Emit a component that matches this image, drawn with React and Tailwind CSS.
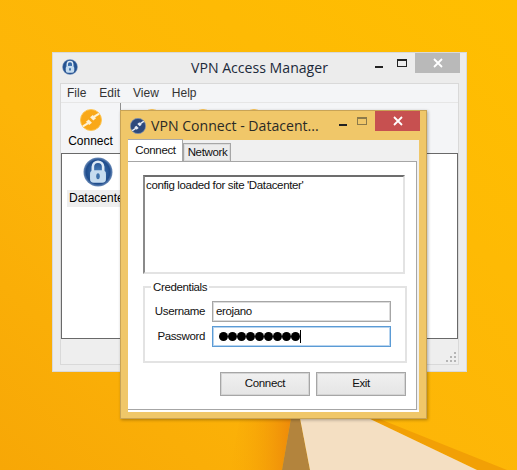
import React from "react";

const seg = { fontFamily: '"Open Sans", "Noto Sans", sans-serif' };
const sans = { fontFamily: '"Liberation Sans", sans-serif' };

function Wallpaper() {
  return (
    <svg className="absolute inset-0" width="517" height="470" viewBox="0 0 517 470">
      <defs>
        <linearGradient id="wp" x1="1" y1="0" x2="0" y2="1">
          <stop offset="0" stopColor="#ffbf00" />
          <stop offset="0.6" stopColor="#fdb508" />
          <stop offset="1" stopColor="#f7a706" />
        </linearGradient>
        <linearGradient id="ob" x1="0" y1="0" x2="1" y2="0">
          <stop offset="0" stopColor="#f7a706" stopOpacity="0" />
          <stop offset="1" stopColor="#ee8a0a" />
        </linearGradient>
      </defs>
      <rect width="517" height="470" fill="url(#wp)" />
      <polygon points="240,418 291,418 282,470 230,470" fill="url(#ob)" />
      <polygon points="368,418 377,418 507,470 477,470" fill="#f2a005" />
      <polygon points="291,418 300,418 310,470 282,470" fill="#b3843d" />
      <polygon points="300,418 368,418 477,470 310,470" fill="#f4dfc2" />
    </svg>
  );
}

function LockIcon({ size = 32, id = "lk" }) {
  return (
    <svg width={size} height={size} viewBox="0 0 32 32">
      <defs>
        <radialGradient id={id} cx="0.5" cy="0.5" r="0.5">
          <stop offset="0" stopColor="#4c82bd" />
          <stop offset="0.82" stopColor="#1f4c8c" />
          <stop offset="1" stopColor="#6f8fbb" />
        </radialGradient>
      </defs>
      <circle cx="16" cy="16" r="15.5" fill={`url(#${id})`} />
      <path d="M10.5 15v-4.5a5.5 5.5 0 0 1 11 0V15" fill="none" stroke="#dbe8f4" strokeWidth="2.8" />
      <rect x="7.5" y="14" width="17" height="13.5" rx="4" fill="#c6dcef" />
      <ellipse cx="16" cy="20.5" rx="1.9" ry="3.2" fill="#3f72ab" />
    </svg>
  );
}

function PlugIcon({ size = 24, dark = false }) {
  const fill = dark ? "#2d4a7c" : "#f9a818";
  const edge = dark ? "#8b9dbb" : "#fcc658";
  const line = dark ? "#e6edf5" : "#fff1d2";
  return (
    <svg width={size} height={size} viewBox="0 0 24 24">
      <circle cx="12" cy="12" r="11.5" fill={fill} stroke={edge} strokeWidth="1" />
      <path d="M4 18.5 L8 16" stroke={line} strokeWidth="2.2" strokeLinecap="round" />
      <path d="M20 5.5 L16 8" stroke={line} strokeWidth="2.2" strokeLinecap="round" />
      <path d="M6.5 14 L10 17.5 L13 15 L9.5 11.5 Z" fill={line} />
      <path d="M17.5 10 L14 6.5 L11 9 L14.5 12.5 Z" fill={line} />
    </svg>
  );
}

function Grip() {
  return (
    <svg width="12" height="12" viewBox="0 0 12 12" fill="#b5b5b5">
      <rect x="9" y="1" width="2" height="2" />
      <rect x="5" y="5" width="2" height="2" />
      <rect x="9" y="5" width="2" height="2" />
      <rect x="1" y="9" width="2" height="2" />
      <rect x="5" y="9" width="2" height="2" />
      <rect x="9" y="9" width="2" height="2" />
    </svg>
  );
}

function CloseX() {
  return (
    <svg width="10" height="10" viewBox="0 0 10 10">
      <path d="M1 1 L9 9 M9 1 L1 9" stroke="#fff" strokeWidth="1.8" />
    </svg>
  );
}

function MainWindow() {
  return (
    <div className="absolute left-[52px] top-[52px] w-[415px] h-[320px] bg-[#ececec] border border-[#d9d9d9] flex flex-col">
      <div className="h-[30px] grid grid-cols-[1fr_auto_1fr] items-start shrink-0">
        <div className="ml-[9px] mt-[6px]">
          <LockIcon size={16} id="lk-small" />
        </div>
        <div className="text-[14.1px] leading-[20px] mt-[5px] text-[#1c2a3a]" style={seg}>
          VPN Access Manager
        </div>
        <div className="flex items-start justify-end mr-[6px] h-[20px]">
          <div className="w-[8px] h-[2px] bg-[#222] mt-[13px]" />
          <div className="w-[10px] h-[8px] border border-[#222] border-t-2 mt-[6px] ml-[14px]" />
          <div className="w-[45px] h-[20px] bg-[#b9b9b9] flex items-center justify-center ml-[8px]">
            <CloseX />
          </div>
        </div>
      </div>
      <div className="mx-[7px] flex-1 flex flex-col border border-[#d9d9d9] bg-[#f4f5f7] min-h-0">
        <div className="h-[18px] flex items-center gap-[13px] px-[6px] text-[12px] text-[#333] shrink-0 border-b border-[#e6e6e6] box-content" style={sans}>
          <span>File</span>
          <span>Edit</span>
          <span>View</span>
          <span>Help</span>
        </div>
        <div className="h-[50px] flex shrink-0">
          <div className="w-[59px] flex flex-col items-center pt-[6px]">
            <PlugIcon size={22} />
            <span className="text-[12px] leading-[14px] mt-[3px] text-black" style={sans}>Connect</span>
          </div>
          <div className="w-px h-[10px] bg-[#8f8f8f]" />
          <div className="pl-[20px] pt-[6px] flex gap-[29px]">
            <PlugIcon size={22} />
            <PlugIcon size={22} />
            <PlugIcon size={22} />
          </div>
        </div>
        <div className="flex-1 bg-white border border-[#696969] min-h-0 pt-[3px] pl-[5px]">
          <div className="w-[62px] flex flex-col items-center">
            <LockIcon size={30} id="lk-big" />
            <div className="mt-[3px] w-[62px] h-[17px] bg-[#eeeeee] text-[12px] leading-[17px] pl-[2px] text-black whitespace-nowrap" style={sans}>
              Datacenter
            </div>
          </div>
        </div>
        <div className="h-[25px] bg-[#eeeeee] shrink-0 flex items-end justify-end pr-[1px] pb-[1px]">
          <Grip />
        </div>
      </div>
      <div className="h-[6px] shrink-0" />
    </div>
  );
}

function Field({ label, value, focus, dots }) {
  return (
    <div className="flex items-center">
      <div className="w-[60px] text-right text-[#111]">{label}</div>
      <div
        className={
          focus
            ? "ml-[7px] w-[179px] h-[21px] bg-white border border-[#5b9bd5] shadow-[inset_0_0_0_1px_#b7d4ef] flex items-center pl-[6px]"
            : "ml-[7px] w-[179px] h-[21px] bg-white border border-[#a6a6a6] shadow-[inset_0_0_0_1px_#dcdcdc] flex items-center pl-[3px]"
        }
      >
        {dots ? (
          <div className="flex items-center">
            {Array.from({ length: 9 }).map((_, i) => (
              <div key={i} className="w-[9px] h-[9px] rounded-full bg-black" />
            ))}
            <div className="w-px h-[13px] bg-black" />
          </div>
        ) : (
          <span className="text-[#111]">{value}</span>
        )}
      </div>
    </div>
  );
}

function Button({ children }) {
  return (
    <div className="w-[90px] h-[24px] border border-[#a6a6a6] shadow-[inset_0_0_0_1px_#d4d4d4] bg-gradient-to-b from-[#f0f0f0] to-[#e5e5e5] flex items-center justify-center text-[#111]">
      {children}
    </div>
  );
}

function Dialog() {
  return (
    <div
      className="absolute left-[120px] top-[110px] w-[307px] h-[309px] bg-[#f0c769] border border-[#c8a356] shadow-[1px_1px_3px_rgba(0,0,0,0.3)] flex flex-col text-[11.5px] tracking-[-0.36px]"
      style={sans}
    >
      <div className="h-[29px] flex items-start shrink-0 tracking-normal">
        <div className="ml-[9px] mt-[7px]">
          <PlugIcon size={16} dark />
        </div>
        <div className="ml-[5px] mt-[5px] text-[14.1px] leading-[20px] text-[#2a2a26] flex-1 whitespace-nowrap" style={seg}>
          VPN Connect - Datacent...
        </div>
        <div className="w-[8px] h-[2px] bg-[#222] mt-[13px] mr-[10px]" />
        <div className="w-[10px] h-[8px] border border-[#8c7a4a] border-t-2 mt-[6px] mr-[8px]" />
        <div className="w-[45px] h-[20px] bg-[#c75050] flex items-center justify-center mr-[6px]">
          <CloseX />
        </div>
      </div>
      <div className="mx-[7px] h-[272px] bg-[#f0f0f0] flex flex-col border-b-2 border-white">
        <div className="flex items-end h-[21px] shrink-0 relative">
          <div className="w-[55px] h-[22px] pl-[1px] bg-white border-r border-t border-[#a8a8a8] flex items-center justify-center text-[#111] relative z-10">
            Connect
          </div>
          <div className="w-[48px] h-[18px] pl-[1px] bg-[#ececec] border border-b-0 border-[#a6a6a6] shadow-[inset_0_0_0_1px_#dcdcdc] flex items-center justify-center text-[#111]">
            Network
          </div>
        </div>
        <div className="flex-1 bg-white border-t border-b border-r border-[#a6a6a6] mr-[2px] px-[15px] pt-[13px] flex flex-col">
          <div className="h-[99px] w-[262px] border-2 border-[#e3e3e3] border-t-[#6d6d6d] border-l-[#8a8a8a] leading-[14px] pl-[1px] pt-[1px] text-[#111]">
            config loaded for site 'Datacenter'
          </div>
          <div className="relative mt-[12px] h-[77px] w-[264px] border-2 border-[#e3e3e3] pt-[13px] flex flex-col gap-[4px]">
            <div className="absolute left-[6px] top-[-8px] bg-white px-[2px] leading-[14px] text-[#111]">
              Credentials
            </div>
            <Field label="Username" value="erojano" />
            <Field label="Password" focus dots />
          </div>
          <div className="mt-[9px] flex justify-end gap-[6px] w-[263px]">
            <Button>Connect</Button>
            <Button>Exit</Button>
          </div>
        </div>
      </div>
    </div>
  );
}

export default function App() {
  return (
    <div className="relative w-[517px] h-[470px] overflow-hidden">
      <Wallpaper />
      <MainWindow />
      <Dialog />
    </div>
  );
}
